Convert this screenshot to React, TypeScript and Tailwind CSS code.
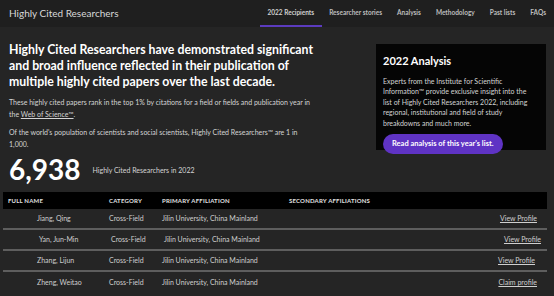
// Highly Cited Researchers - landing
const nav = ['2022 Recipients', 'Researcher stories', 'Analysis', 'Methodology', 'Past lists', 'FAQs']

const rows = [
  { name: 'Jiang, Qing', cat: 'Cross-Field', aff: 'Jilin University, China Mainland', link: 'View Profile', shift: '' },
  { name: 'Yan, Jun-Min', cat: 'Cross-Field', aff: 'Jilin University, China Mainland', link: 'View Profile', shift: 'pl-[2px] -mr-[4px]' },
  { name: 'Zhang, Lijun', cat: 'Cross-Field', aff: 'Jilin University, China Mainland', link: 'View Profile', shift: 'mr-[2px]' },
  { name: 'Zheng, Weitao', cat: 'Cross-Field', aff: 'Jilin University, China Mainland', link: 'Claim profile', shift: '' },
]

export default function App() {
  return (
    <div className="w-[554px] h-[296px] overflow-hidden bg-[#252525] text-[#e6e6e6] font-['Lato',sans-serif]">
      {/* Header */}
      <header className="h-[27px] bg-[#1f1f1f] flex items-center justify-between pl-[9px] pr-[8px]">
        <span className="text-[10px] text-[#d8d8d8]">Highly Cited Researchers</span>
        <nav className="flex items-stretch h-full">
          {nav.map((item, i) => (
            <span
              key={item}
              className={`flex items-center text-[6.5px] font-bold text-[#bdbdbd] border-b-2 ${i === 0 ? 'px-[8px] mr-[-0.5px] border-[#5b3bbf] text-[#d0d0d0]' : 'border-transparent'} ${i === nav.length - 1 ? 'pl-[7.5px]' : i > 0 ? 'px-[7.5px]' : ''}`}
            >
              {item}
            </span>
          ))}
        </nav>
      </header>

      {/* Intro */}
      <div className="flex justify-between pl-[9px] pr-2 pt-[15px]">
        <div className="w-[350px]">
          <h1 className="w-[320px] text-[12.3px] leading-[16px] font-bold text-white">
            Highly Cited Researchers have demonstrated significant and broad influence reflected in their publication of multiple highly cited papers over the last decade.
          </h1>
          <p className="mt-[6px] text-[7px] leading-[12px] text-[#d4d4d4] w-[310px]">
            These highly cited papers rank in the top 1% by citations for a field or fields and publication year in the <span className="underline">Web of Science™</span>.
          </p>
          <p className="mt-[6px] text-[7px] leading-[12px] text-[#d4d4d4] w-[300px]">
            Of the world's population of scientists and social scientists, Highly Cited Researchers™ are 1 in 1,000.
          </p>
        </div>
        <div className="w-[170px] h-[106px] bg-[#050505] mt-[2px] pl-[7px] pr-[12px] pt-[9px]">
          <h2 className="text-[11px] font-bold text-white">2022 Analysis</h2>
          <p className="mt-[6px] text-[7px] leading-[10.5px] text-[#d4d4d4]">
            Experts from the Institute for Scientific Information™ provide exclusive insight into the list of Highly Cited Researchers 2022, including regional, institutional and field of study breakdowns and much more.
          </p>
          <div className="mt-[4px] inline-flex items-center h-[20px] px-[9px] rounded-full bg-[#5f33c4] text-[7.5px] font-bold text-white">
            Read analysis of this year's list.
          </div>
        </div>
      </div>

      {/* Count */}
      <div className="flex items-center gap-[12px] pl-[9px] mt-[4px]">
        <span className="text-[28px] leading-[30px] font-bold text-white">6,938</span>
        <span className="text-[7px] text-[#d4d4d4] mt-[2px]">Highly Cited Researchers in 2022</span>
      </div>

      {/* Table */}
      <div className="mx-[3px] mt-[8px] w-[544px]">
        <div className="h-[17px] bg-black flex items-center text-[6px] font-bold tracking-[0.2px] text-[#e0e0e0]">
          <span className="w-[106px] pl-[5px]">FULL NAME</span>
          <span className="w-[53px]">CATEGORY</span>
          <span className="w-[127px]">PRIMARY AFFILIATION</span>
          <span>SECONDARY AFFILIATIONS</span>
        </div>
        {rows.map((r, i) => (
          <div
            key={r.name}
            className={`h-[21px] flex items-center text-[7px] text-[#cfcfcf] ${i < rows.length - 1 ? 'border-b-2 border-[#5e5e5e]' : ''}`}
          >
            <div className={`flex flex-1 items-center ${r.shift}`}>
              <span className="w-[106px] pl-[34px]">{r.name}</span>
              <span className="w-[53px]">{r.cat}</span>
              <span className="flex-1">{r.aff}</span>
              <span className="underline pr-[10px]">{r.link}</span>
            </div>
          </div>
        ))}
      </div>
    </div>
  )
}
